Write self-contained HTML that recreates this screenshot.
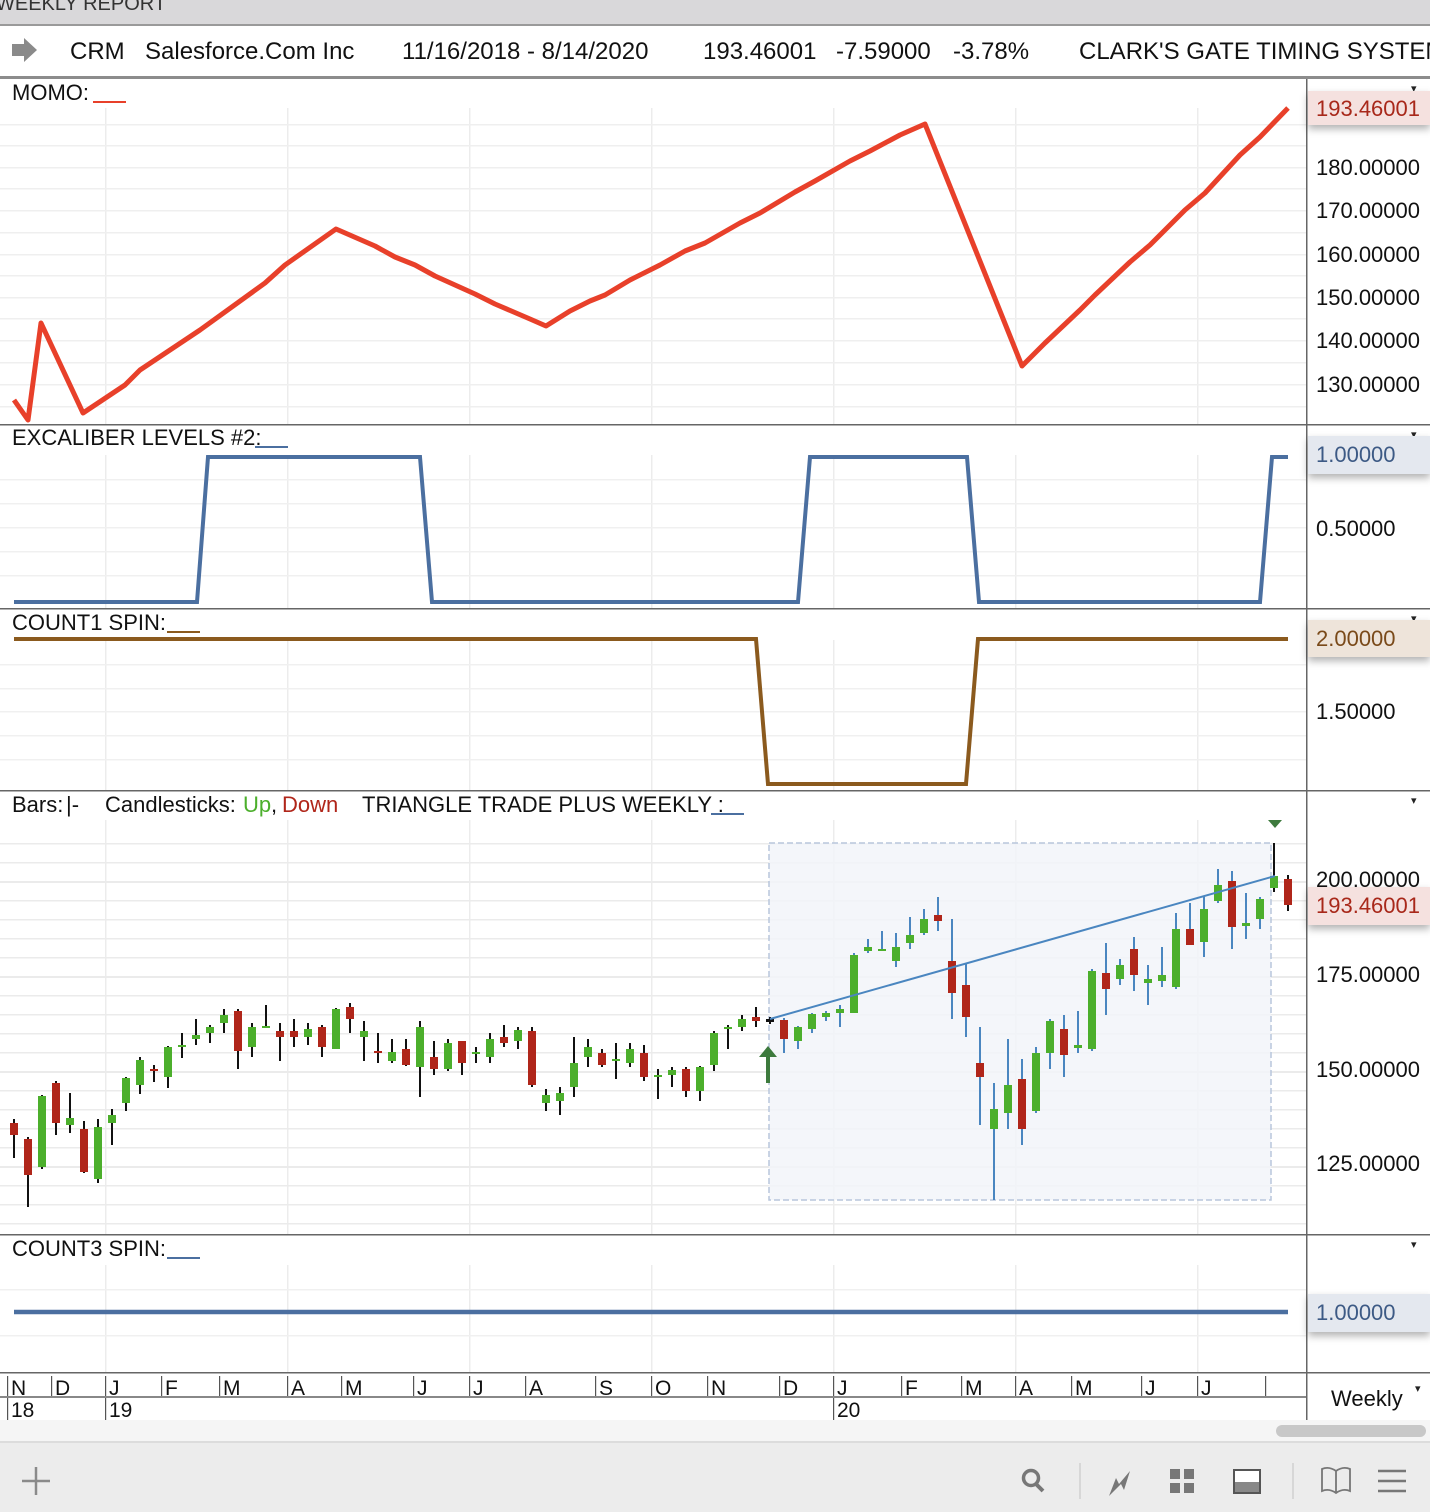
<!DOCTYPE html>
<html><head><meta charset="utf-8"><style>
html,body{margin:0;padding:0;width:1430px;height:1512px;overflow:hidden;background:#fff;font-family:"Liberation Sans",Arial,sans-serif;}
svg text{font-family:"Liberation Sans",Arial,sans-serif;}
</style></head><body>
<svg id="s" width="1430" height="1512" viewBox="0 0 1430 1512" xmlns="http://www.w3.org/2000/svg">
<defs>
<filter id="sh" x="-20%" y="-30%" width="140%" height="180%"><feDropShadow dx="0" dy="4" stdDeviation="4" flood-color="#000" flood-opacity="0.3"/></filter>
</defs>
<rect x="0" y="0" width="1430" height="25" fill="#d9d8da"/>
<text x="-4" y="10" font-size="20" fill="#333">WEEKLY REPORT</text>
<rect x="0" y="24" width="1430" height="2" fill="#9a9a9a"/>
<path d="M12 44 h12 v-6 l13 12 l-13 12 v-6 h-12z" fill="#8a8a8a"/>
<g font-size="24" fill="#111">
<text x="70" y="59">CRM</text>
<text x="145" y="59">Salesforce.Com Inc</text>
<text x="402" y="59">11/16/2018 - 8/14/2020</text>
<text x="703" y="59">193.46001</text>
<text x="836" y="59">-7.59000</text>
<text x="953" y="59">-3.78%</text>
<text x="1079" y="59">CLARK'S GATE TIMING SYSTEM</text>
</g>
<rect x="0" y="76" width="1430" height="3" fill="#8c8c8c"/>
<g id="grid"></g>
<g fill="#666">
<rect x="0" y="424" width="1430" height="1.5"/>
<rect x="0" y="608" width="1430" height="1.5"/>
<rect x="0" y="790" width="1430" height="1.5"/>
<rect x="0" y="1234" width="1430" height="1.5"/>
<rect x="0" y="1372" width="1430" height="1.5"/>
<rect x="1306" y="79" width="1.5" height="1341"/>
</g>
<g font-size="22" fill="#111">
<text x="12" y="100">MOMO:</text><rect x="93" y="101" width="33" height="2" fill="#e8402a"/>
<text x="12" y="445">EXCALIBER LEVELS #2:</text><rect x="255" y="446" width="33" height="2" fill="#4b6fa0"/>
<text x="12" y="630">COUNT1 SPIN:</text><rect x="167" y="631" width="33" height="2" fill="#8b5a1e"/>
<text x="12" y="812">Bars:</text><text x="66" y="812">|-</text>
<text x="105" y="812">Candlesticks:</text><text x="243" y="812" fill="#4caf2c">Up</text><text x="271" y="812">,</text><text x="282" y="812" fill="#b0261a">Down</text>
<text x="362" y="812">TRIANGLE TRADE PLUS WEEKLY :</text><rect x="711" y="813" width="33" height="2" fill="#4b6fa0"/>
<text x="12" y="1256">COUNT3 SPIN:</text><rect x="167" y="1257" width="33" height="2" fill="#4b6fa0"/>
</g>
<g fill="#222" font-size="11">
<text x="1411" y="92">▾</text><text x="1411" y="438">▾</text><text x="1411" y="622">▾</text><text x="1411" y="804">▾</text><text x="1411" y="1248">▾</text><text x="1415" y="1392">▾</text>
</g>
<g font-size="22" fill="#111">
<text x="1316" y="175">180.00000</text><text x="1316" y="218">170.00000</text><text x="1316" y="262">160.00000</text><text x="1316" y="305">150.00000</text><text x="1316" y="348">140.00000</text><text x="1316" y="392">130.00000</text>
<text x="1316" y="536">0.50000</text>
<text x="1316" y="719">1.50000</text>
<text x="1316" y="887">200.00000</text><text x="1316" y="982">175.00000</text><text x="1316" y="1077">150.00000</text><text x="1316" y="1171">125.00000</text>
</g>
<rect x="1308" y="91" width="122" height="34" fill="#f5e1df" filter="url(#sh)"/><text x="1316" y="116" font-size="22" fill="#a8281a">193.46001</text>
<rect x="1308" y="436" width="122" height="38" fill="#e4e8ef" filter="url(#sh)"/><text x="1316" y="462" font-size="22" fill="#3d5a85">1.00000</text>
<rect x="1308" y="620" width="122" height="37" fill="#eee4da" filter="url(#sh)"/><text x="1316" y="646" font-size="22" fill="#7a4a1a">2.00000</text>
<rect x="1308" y="887" width="122" height="38" fill="#f5e1df" filter="url(#sh)"/><text x="1316" y="913" font-size="22" fill="#a8281a">193.46001</text>
<rect x="1308" y="1294" width="122" height="38" fill="#e4e8ef" filter="url(#sh)"/><text x="1316" y="1320" font-size="22" fill="#3d5a85">1.00000</text>
<polyline fill="none" stroke="#e8402a" stroke-width="5" stroke-linejoin="round" points="14,400 28,420 41,323 83,413 125,385 140,370 200,330 265,283 285,265 336,229 375,246 395,257 415,265 435,276 475,294 495,304 530,319 546,326 570,311 590,301 605,295 630,280 660,265 685,251 705,243 740,223 760,213 795,192 815,181 850,161 870,151 900,135 925,124 1022,366 1045,343 1080,310 1095,295 1130,262 1150,245 1185,210 1205,193 1240,155 1260,137 1288,108"/>
<polyline fill="none" stroke="#4b6fa0" stroke-width="4" points="14,602 197,602 208,457 420,457 432,602 798,602 810,457 967,457 979,602 1260,602 1272,457 1288,457"/>
<polyline fill="none" stroke="#8b5a1e" stroke-width="4" points="14,639 756,639 768,784 966,784 978,639 1288,639"/>
<line x1="14" y1="1312" x2="1288" y2="1312" stroke="#4b6fa0" stroke-width="4.5"/>
<rect x="769" y="843" width="502" height="357" fill="#f2f4f9" fill-opacity="0.85" stroke="#b8c6dc" stroke-width="1.5" stroke-dasharray="6,3"/>
<g id="cand"></g>
<line x1="770" y1="1019" x2="1275" y2="876" stroke="#4a86c0" stroke-width="2"/>
<path d="M759 1057 l9 -11 l9 11 h-7 v26 h-4 v-26z" fill="#3d7a3d"/>
<path d="M1268 820 h14 l-7 8z" fill="#3d7a3d"/>
<rect x="0" y="1396" width="1306" height="2" fill="#888"/>
<g id="dates" font-size="21" fill="#111"></g>
<text x="1331" y="1406" font-size="22" fill="#111">Weekly</text>
<rect x="0" y="1420" width="1430" height="23" fill="#f5f5f5"/>
<rect x="0" y="1441" width="1430" height="2" fill="#dcdcdc"/>
<rect x="1276" y="1425" width="150" height="12" rx="6" fill="#c8c8c8"/>
<rect x="0" y="1443" width="1430" height="69" fill="#ececec"/>
<g stroke="#8a8a8a" fill="none">
<path d="M36 1467 v28 M22 1481 h28" stroke-width="2.5"/>
<circle cx="1031" cy="1478" r="7.5" stroke="#777" stroke-width="3.5"/>
<path d="M1036 1484 l7 7" stroke="#777" stroke-width="4"/>
<path d="M1080 1463 v36 M1293 1463 v36" stroke="#d0d0d0" stroke-width="1.5"/>
<path d="M1109 1496 l7 -18 l3 6 l11 -13 l-6 19 l-3 -6z" fill="#777" stroke="none"/>
<path d="M1322 1469 q7 -3 14 2 q7 -5 14 -2 v22 q-7 -3 -14 2 q-7 -5 -14 -2z M1336 1471 v22" stroke="#777" stroke-width="1.8"/>
<path d="M1378 1471 h28 M1378 1481 h28 M1378 1491 h28" stroke="#777" stroke-width="2.5"/>
</g>
<g fill="#777"><rect x="1170" y="1469" width="10" height="10"/><rect x="1184" y="1469" width="10" height="10"/><rect x="1170" y="1483" width="10" height="10"/><rect x="1184" y="1483" width="10" height="10"/></g>
<rect x="1234" y="1470" width="26" height="23" fill="#fff" stroke="#555" stroke-width="2"/><rect x="1235" y="1482" width="24" height="10" fill="#888"/>
</svg>
<script>
var NS="http://www.w3.org/2000/svg";
function el(p,t,a){var e=document.createElementNS(NS,t);for(var k in a)e.setAttribute(k,a[k]);p.appendChild(e);return e;}
var g=document.getElementById('grid');
var vx=[105,287,469,651,833,1015,1197];
var panels=[[108,424],[455,608],[640,790],[820,1234],[1265,1372]];
panels.forEach(function(p){vx.forEach(function(x){el(g,'rect',{x:x,y:p[0],width:1.5,height:p[1]-p[0],fill:'#ececec'});});});
[124,145,167,188,210,232,254,275,297,318,340,362,384,406].forEach(function(y){el(g,'rect',{x:0,y:y,width:1306,height:1.5,fill:'#efefef'});});
[479,503,527,551,575].forEach(function(y){el(g,'rect',{x:0,y:y,width:1306,height:1.5,fill:'#f0f0f0'});});
[664,688,711,735,759].forEach(function(y){el(g,'rect',{x:0,y:y,width:1306,height:1.5,fill:'#f0f0f0'});});
for(var y=843;y<1230;y+=19){el(g,'rect',{x:0,y:y,width:1306,height:(Math.abs(y-879)%95<10?2:1.5),fill:'#ebebeb'});}
[1289,1335].forEach(function(y){el(g,'rect',{x:0,y:y,width:1306,height:1.5,fill:'#f0f0f0'});});
var C=[[1123,1135,1119,1158,0],[1139,1175,1137,1207,0],[1167,1096,1095,1169,1],[1083,1123,1081,1135,0],[1125,1118,1093,1133,1],[1129,1172,1121,1173,0],[1179,1127,1119,1183,1],[1123,1115,1109,1145,1],[1103,1078,1077,1111,1],[1085,1060,1057,1094,1],[1069,1071,1065,1082,0],[1077,1047,1046,1088,1],[1046,1045,1033,1058,1],[1039,1035,1019,1045,1],[1033,1027,1025,1043,1],[1023,1015,1009,1033,1],[1011,1051,1009,1069,0],[1047,1027,1023,1057,1],[1027,1026,1005,1028,1],[1031,1037,1023,1061,0],[1031,1037,1019,1047,0],[1037,1029,1023,1045,1],[1027,1047,1025,1057,0],[1049,1009,1008,1049,1],[1007,1019,1003,1033,0],[1037,1031,1021,1061,1],[1051,1052,1033,1063,0],[1061,1052,1039,1063,1],[1049,1065,1039,1066,0],[1067,1027,1021,1097,1],[1057,1069,1041,1075,0],[1069,1043,1039,1071,1],[1041,1063,1041,1075,0],[1053,1052,1047,1063,1],[1057,1039,1033,1063,1],[1037,1043,1025,1047,0],[1041,1030,1027,1049,1],[1031,1085,1027,1087,0],[1103,1095,1089,1111,1],[1101,1093,1087,1115,1],[1087,1063,1037,1097,1],[1057,1047,1039,1067,1],[1053,1065,1049,1067,0],[1061,1059,1043,1079,1],[1063,1049,1043,1067,1],[1053,1077,1045,1081,0],[1077,1075,1069,1099,1],[1075,1070,1067,1087,1],[1069,1091,1067,1097,0],[1091,1067,1066,1101,1],[1065,1033,1031,1071,1],[1028,1027,1025,1049,1],[1027,1019,1015,1031,1],[1017,1021,1007,1027,0],[1019,1022,1017,1024,2],
[1020,1039,1018,1053,0],[1041,1027,1026,1049,1],[1029,1014,1013,1033,1],[1017,1013,1011,1021,1],[1013,1009,1005,1027,1],[1013,955,953,1013,1],[951,947,939,953,1],[951,949,931,951,1],[961,947,933,967,1],[943,935,917,949,1],[933,919,909,935,1],[915,921,897,931,0],[961,993,919,1019,0],[985,1017,963,1037,0],[1063,1077,1027,1125,0],[1129,1109,1083,1200,1],[1113,1085,1039,1129,1],[1079,1129,1059,1145,0],[1111,1053,1047,1113,1],[1053,1021,1019,1069,1],[1029,1055,1015,1077,0],[1048,1045,1011,1053,1],[1049,971,969,1051,1],[973,989,943,1015,0],[979,965,959,985,1],[949,975,937,991,0],[983,979,965,1005,1],[981,975,947,987,1],[987,929,913,989,1],[929,945,903,945,0],[942,909,896,957,1],[901,885,869,903,1],[881,927,871,949,0],[926,923,893,939,1],[919,899,897,929,1],[888,876,843,892,1],[879,905,875,911,0]];
var cg=document.getElementById('cand');
C.forEach(function(c,i){var x=14+14*i;var blue=(i>=55&&i<=89);
el(cg,'rect',{x:x-1,y:c[2],width:2,height:c[3]-c[2],fill:blue?'#4a86c0':'#111'});
var t=Math.min(c[0],c[1]),h=Math.max(2,Math.abs(c[1]-c[0]));
el(cg,'rect',{x:x-4,y:t,width:8,height:h,fill:c[4]==2?'#111':(c[4]?'#4caf2c':'#b0261a')});});
var dg=document.getElementById('dates');
var M=[['N',8],['D',52],['J',106],['F',162],['M',220],['A',288],['M',342],['J',414],['J',470],['A',526],['S',596],['O',652],['N',708],['D',780],['J',834],['F',902],['M',962],['A',1016],['M',1072],['J',1142],['J',1198],['',1266]];
M.forEach(function(m){el(dg,'rect',{x:m[1]-1,y:1376,width:1.2,height:20,fill:'#555'});var t=el(dg,'text',{x:m[1]+3,y:1395});t.textContent=m[0];});
[['18',8],['19',106],['20',834]].forEach(function(m){el(dg,'rect',{x:m[1]-1,y:1398,width:1.2,height:22,fill:'#555'});var t=el(dg,'text',{x:m[1]+3,y:1417});t.textContent=m[0];});
</script>
</body></html>
